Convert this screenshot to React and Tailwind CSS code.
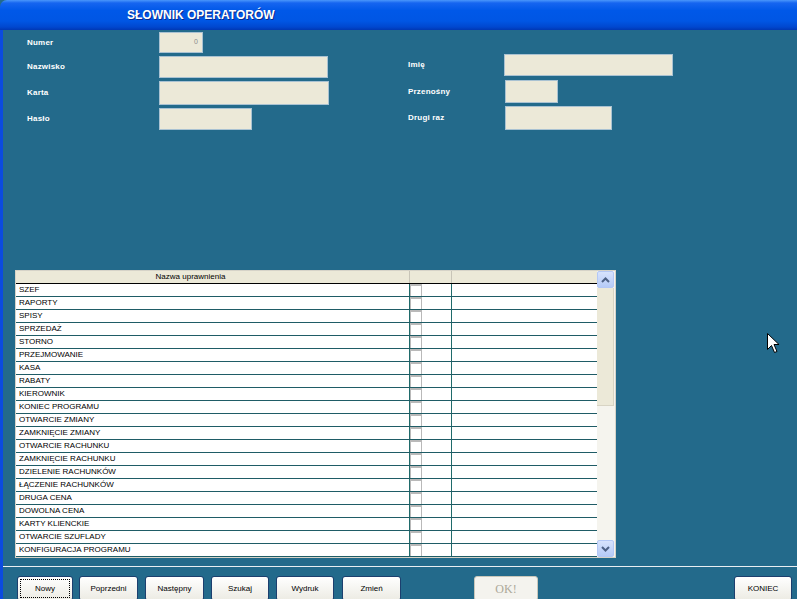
import React from "react";

const rows = [
  "SZEF",
  "RAPORTY",
  "SPISY",
  "SPRZEDAŻ",
  "STORNO",
  "PRZEJMOWANIE",
  "KASA",
  "RABATY",
  "KIEROWNIK",
  "KONIEC PROGRAMU",
  "OTWARCIE ZMIANY",
  "ZAMKNIĘCIE ZMIANY",
  "OTWARCIE RACHUNKU",
  "ZAMKNIĘCIE RACHUNKU",
  "DZIELENIE RACHUNKÓW",
  "ŁĄCZENIE RACHUNKÓW",
  "DRUGA CENA",
  "DOWOLNA CENA",
  "KARTY KLIENCKIE",
  "OTWARCIE SZUFLADY",
  "KONFIGURACJA PROGRAMU",
  "",
];

function Field({ label, labelW, inputW, h, mt, value }) {
  return (
    <div className={`flex items-center ${mt} ${h}`}>
      <div className={`${labelW} text-[8px] font-bold text-white leading-none tracking-[0.2px]`}>{label}</div>
      <div
        className={`${inputW} h-full bg-[#ece9d8] border border-[#a9c2d2] flex items-center justify-end pr-[4px] text-[7px] text-[#8a8a8a]`}
      >
        {value}
      </div>
    </div>
  );
}

function Btn({ children, className, focus }) {
  return (
    <div
      className={`h-[25px] shrink-0 rounded-[3px] border border-[#1c3f6e] bg-gradient-to-b from-[#ffffff] to-[#ecebe3] flex items-center justify-center p-[2px] ${className}`}
    >
      <div
        className={`w-full h-full flex items-center justify-center text-[8px] text-black ${
          focus ? "border border-dotted border-black" : ""
        }`}
      >
        {children}
      </div>
    </div>
  );
}

function Chevron({ up }) {
  return (
    <svg width="9" height="6" viewBox="0 0 9 6">
      <path
        d={up ? "M1 5 L4.5 1.5 L8 5" : "M1 1 L4.5 4.5 L8 1"}
        fill="none"
        stroke="#4d6185"
        strokeWidth="2"
      />
    </svg>
  );
}

export default function App() {
  return (
    <div
      className="relative w-[797px] h-[599px] overflow-hidden bg-[#236a8b] flex flex-col"
      style={{ fontFamily: '"Liberation Sans", Arial, sans-serif' }}
    >
      {/* Title bar */}
      <div className="h-[30px] shrink-0 rounded-tl-[7px] bg-[linear-gradient(to_bottom,#4a97fb_0%,#1665f0_10%,#0058e8_35%,#0056e4_70%,#0047cf_90%,#0038b4_100%)] flex items-center">
        <div
          className="ml-[127px] text-[12px] font-bold text-white"
          style={{ textShadow: "1px 1px 0 #0a2a8a" }}
        >
          SŁOWNIK OPERATORÓW
        </div>
      </div>

      {/* Body */}
      <div className="flex-1 flex flex-col border-l-[3px] border-[#0b4be0]">
        {/* Form */}
        <div className="h-[240px] shrink-0 flex">
          <div className="w-[405px] pl-[24px] flex flex-col">
            <Field label="Numer" labelW="w-[132px]" inputW="w-[44px]" h="h-[21px]" mt="mt-[2px]" value="0" />
            <Field label="Nazwisko" labelW="w-[132px]" inputW="w-[169px]" h="h-[22px]" mt="mt-[3px]" />
            <Field label="Karta" labelW="w-[132px]" inputW="w-[170px]" h="h-[24px]" mt="mt-[3px]" />
            <Field label="Hasło" labelW="w-[132px]" inputW="w-[93px]" h="h-[22px]" mt="mt-[3px]" />
          </div>
          <div className="flex flex-col">
            <Field label="Imię" labelW="w-[96px]" inputW="w-[169px]" h="h-[22px]" mt="mt-[24px]" />
            <Field label="Przenośny" labelW="w-[97px]" inputW="w-[53px]" h="h-[23px]" mt="mt-[4px]" />
            <Field label="Drugi raz" labelW="w-[97px]" inputW="w-[107px]" h="h-[24px]" mt="mt-[3px]" />
          </div>
        </div>

        {/* Grid */}
        <div className="ml-[12px] w-[601px] h-[288px] shrink-0 flex border border-[#d6d3c8] bg-white overflow-hidden">
          <div className="w-[582px] flex flex-col overflow-hidden">
            <div className="h-[13px] shrink-0 flex bg-[#ece9d8] border-b border-black text-[8px] leading-none">
              <div className="w-[393px] pr-[44px] flex items-center justify-center text-black">Nazwa uprawnienia</div>
              <div className="w-[43px] flex border-l border-[#c8c5b8]">
                <div className="w-[12px]" />
                <div className="flex-1 border-r border-[#c8c5b8]" />
              </div>
              <div className="flex-1" />
            </div>
            {rows.map((r, i) => (
              <div key={i} className="h-[13px] shrink-0 flex border-b border-[#1f5c66]">
                <div className="w-[393px] pl-[3px] flex items-center text-[8px] leading-none text-black whitespace-nowrap">
                  {r}
                </div>
                <div className="w-[43px] flex border-l border-[#1f6b6b]">
                  <div className="w-[12px] h-full border-x border-t-2 border-[#b9b9b9]" />
                  <div className="flex-1 border-r border-[#1f6b6b]" />
                </div>
                <div className="flex-1" />
              </div>
            ))}
          </div>
          {/* Scrollbar */}
          <div className="w-[18px] flex flex-col bg-[#f5f4ee]">
            <div className="h-[17px] w-[17px] shrink-0 rounded-[2px] border border-[#b4c8f6] bg-gradient-to-b from-[#d7e3fd] to-[#b6cbf7] flex items-center justify-center">
              <Chevron up />
            </div>
            <div className="h-[118px] w-[17px] shrink-0 bg-[#ece9d8] border-r border-b border-[#d8d4c4]" />
            <div className="flex-1" />
            <div className="h-[17px] w-[17px] shrink-0 rounded-[2px] border border-[#b4c8f6] bg-gradient-to-b from-[#d7e3fd] to-[#b6cbf7] flex items-center justify-center">
              <Chevron />
            </div>
          </div>
        </div>

        {/* Separator */}
        <div className="mt-[8px] h-[1px] bg-[#e8eef2] shrink-0" />

        {/* Buttons */}
        <div className="mt-[9px] flex items-start">
          <Btn className="ml-[14px] w-[56px]" focus>Nowy</Btn>
          <Btn className="ml-[6px] w-[59px]">Poprzedni</Btn>
          <Btn className="ml-[7px] w-[59px]">Następny</Btn>
          <Btn className="ml-[7px] w-[58px]">Szukaj</Btn>
          <Btn className="ml-[7px] w-[58px]">Wydruk</Btn>
          <Btn className="ml-[8px] w-[59px]">Zmień</Btn>
          <div className="ml-[73px] w-[64px] h-[25px] shrink-0 rounded-[3px] border border-[#c9c7ba] bg-[#f4f3ee] flex items-center justify-center text-[12px] text-[#aca899]" style={{ fontFamily: '"Liberation Serif", serif' }}>
            OK!
          </div>
          <Btn className="ml-auto mr-[5px] w-[58px]">KONIEC</Btn>
        </div>
      </div>

      {/* Mouse cursor */}
      <svg className="absolute left-[767px] top-[333px]" width="13" height="21" viewBox="0 0 13 21">
        <path
          d="M0.5 0.5 L0.5 16.5 L4.5 12.5 L7.5 19.5 L10 18.5 L7 11.5 L12 11.5 Z"
          fill="#ffffff"
          stroke="#000000"
          strokeWidth="1"
        />
      </svg>
    </div>
  );
}
